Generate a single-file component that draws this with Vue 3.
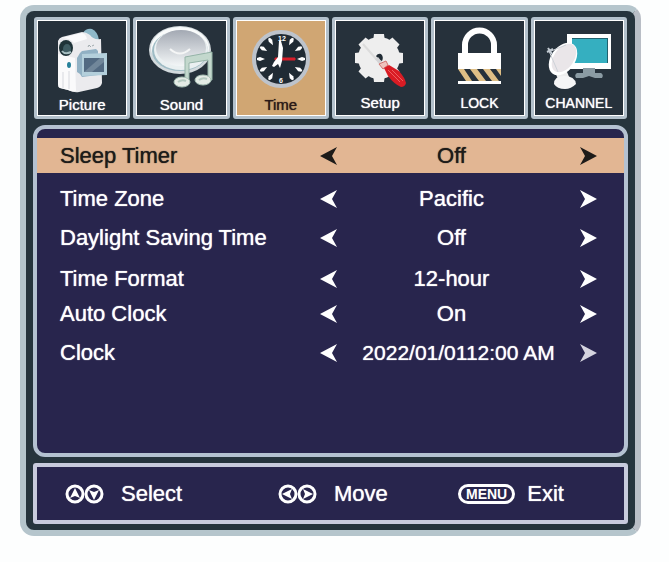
<script setup>
import { ref, reactive } from 'vue';

const activeTab = ref('Time');
const activeRow = ref(0);

const tabs = [
  { name: 'Picture' },
  { name: 'Sound' },
  { name: 'Time' },
  { name: 'Setup' },
  { name: 'LOCK', caps: true },
  { name: 'CHANNEL', caps: true }
];

const rows = reactive([
  { label: 'Sleep Timer', options: ['Off', '30 min', '60 min', '90 min'], current: 0 },
  { label: 'Time Zone', options: ['Pacific', 'Mountain', 'Central', 'Eastern'], current: 0 },
  { label: 'Daylight Saving Time', options: ['Off', 'On'], current: 0 },
  { label: 'Time Format', options: ['12-hour', '24-hour'], current: 0 },
  { label: 'Auto Clock', options: ['On', 'Off'], current: 0 },
  { label: 'Clock', options: ['2022/01/0112:00 AM'], current: 0, wide: true }
]);

// the numerals take the place of the marks at 12 and 6
const hourMarks = [30, 60, 90, 120, 150, 210, 240, 270, 300, 330];
const teeth = Array.from({ length: 8 }, (_, i) => i * 45);

const change = (row, index, step) => {
  activeRow.value = index;
  row.current = (row.current + step + row.options.length) % row.options.length;
};
</script>

<template>
  <main class="tv-menu">
    <nav class="tabs">
      <button v-for="tab in tabs"
        :key="tab.name"
        type="button"
        class="tab"
        :class="{ active: tab.name === activeTab }"
        @click="activeTab = tab.name">
        <!-- camcorder -->
        <svg v-if="tab.name === 'Picture'" viewBox="40 22 84 72" aria-hidden="true">
          <path d="M83 33Q86 28 92 29Q98 32 99 40L90 42Z" fill="#8fb9c9" />
          <path d="M58 41Q59 38 62 37L82 32Q86 32 90 35Q93 40 101 39L102 83Q101 87 97 88L79 92Q74 93 68 90L60 88Q58 87 58 84Z" fill="#ebebee" />
          <path d="M58 54L75 58L76 91Q72 92 68 90L60 88Q58 87 58 84Z" fill="#fafafb" />
          <path d="M62 38L82 33Q86 34 87 39L74 43Q70 38 62 38Z" fill="#fbfbfc" />
          <path d="M63 72V88M69 71V89" stroke="#d6d8de" fill="none" />
          <ellipse cx="66" cy="48" rx="7" ry="8" fill="#1f3338" />
          <ellipse cx="67" cy="49" rx="4" ry="5" fill="#3f5c62" />
          <path d="M62 51Q65 55 71 52" stroke="#a6bdc0" stroke-width="2" fill="none" />
          <path d="M88 47L89 45L91 47M92 46L94 45" stroke="#9fa9ad" fill="none" />
          <ellipse cx="69" cy="65" rx="2" ry="3" fill="#27819a" />
          <path d="M80 53L82 51L96 49L98 51V75L82 77L80 74L77 72V58Z" fill="#91b1c4" />
          <path d="M82 54L107 53V75L82 76Z" fill="#b3cfdb" />
          <path d="M84 58H104V72H84Z" fill="#526a82" />
          <path d="M84 72L100 58H104V62L92 72Z" fill="#71879a" />
        </svg>
        <!-- speaker and notes -->
        <svg v-else-if="tab.name === 'Sound'" viewBox="139 22 84 72" aria-hidden="true">
          <defs>
            <linearGradient id="cone" x1="0" y1="0" x2="0" y2="1">
              <stop offset="0" stop-color="#a3a9b3" />
              <stop offset="1" stop-color="#f3f6f7" />
            </linearGradient>
          </defs>
          <ellipse cx="180" cy="50" rx="31" ry="24" fill="#d3dadd" />
          <ellipse cx="180" cy="48" rx="29" ry="21" fill="#f9fbfb" />
          <ellipse cx="180" cy="51" rx="28" ry="20" fill="#9fbcc5" />
          <ellipse cx="181" cy="50" rx="27" ry="20" fill="#eaf0f1" />
          <ellipse cx="181" cy="48" rx="25" ry="18" fill="url(#cone)" />
          <path d="M170 49Q180 58 190 49" stroke="#f5f6f6" stroke-width="2" fill="none" />
          <path d="M185 57L212 52V80H208V60L189 63V82H185Z" fill="#c3d8cd" stroke="#94b3a7" />
          <ellipse cx="182" cy="82" rx="8" ry="5" fill="#e4ebe5" stroke="#a5beb3" />
          <ellipse cx="203" cy="80" rx="8" ry="5" fill="#e4ebe5" stroke="#a5beb3" />
          <path d="M178 82Q182 79 186 81M199 80Q203 77 207 79" stroke="#b3c9bf" stroke-width="2" fill="none" />
        </svg>
        <!-- clock -->
        <svg v-else-if="tab.name === 'Time'" viewBox="239 22 84 72" aria-hidden="true">
          <circle cx="281" cy="59" r="27" fill="#202b34" stroke="#bdc3cb" stroke-width="4" />
          <path v-for="angle in hourMarks"
            :key="'hour' + angle"
            d="M280 35H282L283 38L281 43L279 38Z"
            fill="#fff"
            :transform="`rotate(${angle} 281 59)`" />
          <text x="282" y="41" class="dial">12</text>
          <text x="281" y="83" class="dial">6</text>
          <path d="M275 58H295V60H275Z" fill="#d81f2b" stroke="#d81f2b" />
          <path d="M279 41H281L283 48L282 61L280 68L278 64L274 67L272 66L274 62L278 57Z" fill="#fff" />
        </svg>
        <!-- gear and screwdriver -->
        <svg v-else-if="tab.name === 'Setup'" viewBox="338 22 84 72" aria-hidden="true">
          <circle cx="379" cy="58" r="21" fill="#eee" />
          <path v-for="angle in teeth"
            :key="'tooth' + angle"
            d="M374 34H384L385 42H373Z"
            fill="#eee"
            :transform="`rotate(${angle} 379 58)`" />
          <path d="M376 56Q378 53 381 54Q384 57 382 61L379 60Z" fill="#202b34" />
          <path d="M363 44L377 60" stroke="#dcdcdc" stroke-width="2" />
          <path d="M375 59L378 57L382 62L379 64Z" fill="#d4d4d6" />
          <path d="M379 64L386 61L388 65L383 69Z" fill="#efc3bd" stroke="#d0736f" />
          <path d="M384 68L389 65L399 71Q405 78 406 83Q405 87 401 87Q394 84 388 76Z" fill="#d91c24" />
          <path d="M388 70L400 82M392 70L403 81" stroke="#ee5f60" />
        </svg>
        <!-- padlock -->
        <svg v-else-if="tab.name === 'LOCK'" viewBox="437 22 84 72" aria-hidden="true">
          <path d="M465 54V45A14 14 0 0 1 494 45V54" fill="none" stroke="#fff" stroke-width="6" />
          <path d="M458 53H501V69H458ZM458 81H501V84H458Z" fill="#fff" />
          <path d="M458 69H464L472 81H466ZM470 69H477L486 81H479ZM483 69H490L499 81H492ZM496 69H501V76Z" fill="#dfbf86" />
        </svg>
        <!-- dish and screen -->
        <svg v-else viewBox="537 22 84 72" aria-hidden="true">
          <path d="M567 34H611V69H567Z" fill="#fff" />
          <path d="M572 38H608V63H572Z" fill="#35afc0" />
          <path d="M572 38H608V63H607V39H572Z" fill="#20616e" />
          <path d="M583 68H595V73H601Q604 75 602 78H595L589 76L583 78H576Q574 75 577 73H583Z" fill="#8b9ba3" />
          <path d="M555 72H567L570 79H558Z" fill="#eee" />
          <path d="M554 84Q554 76 564 76Q575 76 576 84Q571 89 565 89Q557 89 554 84Z" fill="#f5f5f6" />
          <ellipse cx="563" cy="59" rx="12" ry="18" fill="#fff" transform="rotate(35 563 59)" />
          <ellipse cx="564" cy="58" rx="10" ry="16" fill="#eae6e9" transform="rotate(35 564 58)" />
          <path d="M549 51L558 72M551 51L566 45" stroke="#cdd2d8" fill="none" />
          <path d="M548 48L552 54M547 52L553 49" stroke="#c3cbd3" stroke-width="2" fill="none" />
        </svg>
        <span class="tab-name" :class="{ caps: tab.caps, raised: tab.caps || tab.name === 'Setup' }">{{ tab.name }}</span>
      </button>
    </nav>

    <section class="settings">
      <div v-for="(row, index) in rows"
        :key="row.label"
        class="row"
        :class="{ selected: index === activeRow, wide: row.wide }"
        @click="activeRow = index">
        <span class="label">{{ row.label }}</span>
        <div class="control">
          <button type="button" :aria-label="row.label + ' previous'" @click.stop="change(row, index, -1)">
            <svg viewBox="0 0 17 18" aria-hidden="true"><path d="M0 9L17 0L12 9L17 18Z" /></svg>
          </button>
          <span class="value">{{ row.options[row.current] }}</span>
          <button type="button" class="next" :aria-label="row.label + ' next'" @click.stop="change(row, index, 1)">
            <svg viewBox="0 0 17 18" aria-hidden="true"><path d="M17 9L0 0L5 9L0 18Z" /></svg>
          </button>
        </div>
      </div>
    </section>

    <footer>
      <div class="hint">
        <svg viewBox="0 0 40 20" aria-hidden="true">
          <circle cx="10" cy="10" r="8" />
          <circle cx="29" cy="10" r="8" />
          <path d="M10 4L15 14L10 12L5 14ZM29 16L24 6L29 8L34 6Z" />
        </svg>
        <span>Select</span>
      </div>
      <div class="hint">
        <svg viewBox="0 0 40 20" aria-hidden="true">
          <circle cx="10" cy="10" r="8" />
          <circle cx="29" cy="10" r="8" />
          <path d="M4 10L14 5L12 10L14 15ZM35 10L25 5L27 10L25 15Z" />
        </svg>
        <span>Move</span>
      </div>
      <div class="hint">
        <kbd>MENU</kbd>
        <span>Exit</span>
      </div>
    </footer>
  </main>
</template>

<style>
body {
  margin: 0;
  background-color: #fdfefe;
}
</style>

<style scoped>
* {
  box-sizing: border-box;
}

.tv-menu {
  font-family: "Liberation Sans", Arial, sans-serif;
  margin: 5px 28px 24px 20px;
  padding: 6px 7px;
  background-color: #26343d;
  border: 6px solid #b5c5cc;
  border-right-color: #b9bec6;
  border-radius: 14px;
  color: #ffffff;
  display: flex;
  flex-direction: column;
  gap: 6px;
}

button {
  font: inherit;
  color: inherit;
  padding: 0;
  cursor: pointer;
}

.tabs {
  display: flex;
  gap: 3px;
  padding: 0 1px;
}

.tab {
  flex: 1 1 0;
  min-width: 0;
  height: 102px;
  display: flex;
  flex-direction: column;
  align-items: center;
  background-color: #26313b;
  border: 3px solid #b3c1cc;
  border-radius: 3px;
  box-shadow: inset 0 0 0 1px #ffffff;
  padding-top: 2px;
}

.tab svg {
  display: block;
  width: 84px;
  max-width: 100%;
  height: 72px;
}

.tab.active {
  background-color: #d0a673;
  color: #2b1a18;
}

.dial {
  font-size: 7px;
  font-weight: bold;
  text-anchor: middle;
  fill: #ffffff;
}

.tab-name {
  font-size: 15px;
  line-height: 22px;
  text-shadow: 0 0 1px currentColor;
}

.tab-name.raised {
  line-height: 18px;
}

.tab-name.caps {
  font-size: 14px;
}

.settings {
  min-height: 332px;
  padding-top: 9px;
  background-color: #28254d;
  border: 4px solid #b4c1d1;
  border-radius: 12px;
}

.row {
  display: grid;
  grid-template-columns: 260fr 277fr;
  align-items: center;
  height: 35px;
  margin-top: 4px;
  padding: 0 27px 0 23px;
  font-size: 22px;
  text-shadow: 0 0 1px currentColor;
}

.row:first-child {
  margin: 0 0 8px;
}

.row:nth-child(4) {
  margin-top: 6px;
}

.row:nth-child(2),
.row:nth-child(5) {
  margin-top: 0;
}

.row.selected {
  background-color: #e2b693;
  color: #1d1b19;
}

.label {
  white-space: nowrap;
}

.control {
  display: flex;
  align-items: center;
}

.control button {
  flex: none;
  width: 17px;
  height: 18px;
  background: none;
  border: none;
}

.control svg {
  display: block;
  width: 17px;
  height: 18px;
  fill: currentColor;
}

.value {
  flex: 1;
  padding-right: 14px;
  text-align: center;
  white-space: nowrap;
}

.wide .value {
  padding-right: 0;
  font-size: 21px;
}

.wide .next {
  color: #d5d4df;
}

footer {
  display: grid;
  grid-template-columns: 213fr 180fr 166fr;
  align-items: center;
  height: 61px;
  padding-left: 28px;
  background-color: #28254d;
  border: 4px solid #c8cbdd;
  border-radius: 3px;
}

.hint {
  display: flex;
  align-items: center;
  gap: 16px;
  font-size: 22px;
  text-shadow: 0 0 1px currentColor;
}

.hint:last-child {
  gap: 12px;
}

.hint svg {
  width: 40px;
  height: 20px;
  fill: #ffffff;
}

.hint circle {
  fill: none;
  stroke: #ffffff;
  stroke-width: 3;
}

kbd {
  font-family: inherit;
  font-size: 14px;
  font-weight: bold;
  line-height: 14px;
  padding: 0 5px;
  border: 3px solid #ffffff;
  border-radius: 10px;
  text-shadow: none;
}
</style>
